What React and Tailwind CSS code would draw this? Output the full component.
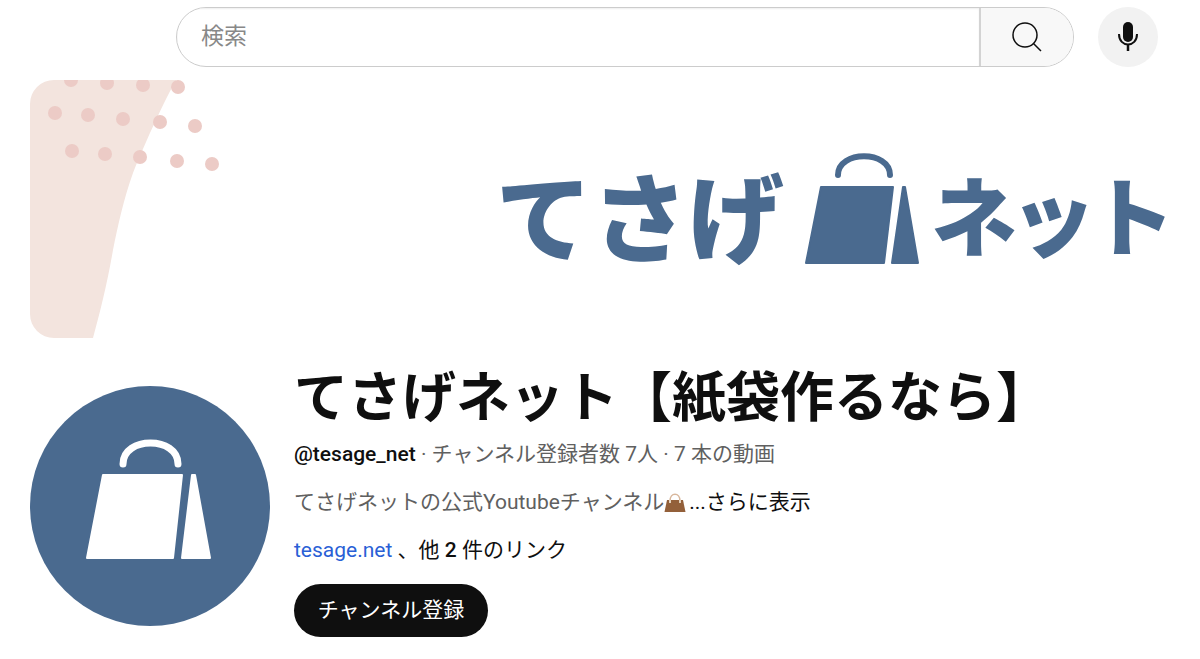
const FONT = { fontFamily: 'Roboto, "Noto Sans CJK JP", sans-serif' };

const dots = [
  [41, 0], [77, 3], [113, 5], [148, 7],
  [25, 33], [58, 35], [93, 39], [130, 42], [165, 46],
  [42, 71], [75, 74], [110, 77], [147, 81], [182, 84],
];

const Decoration = () => (
  <svg className="absolute left-0 top-0" width="240" height="258" viewBox="0 0 240 258">
    <path d="M0 0H146C134 22 118 56 103 93C94 118 88 145 83 170C77 205 70 232 63 258H0Z" fill="#f3e4de" />
    {dots.map(([cx, cy]) => (
      <circle key={`${cx}-${cy}`} cx={cx} cy={cy} r="7" fill="#eccbc6" />
    ))}
  </svg>
);

const BagLogo = () => (
  <svg width="116" height="114" viewBox="0 0 116 114" className="shrink-0">
    <path d="M34 22C34 -3 86 -3 86 22" fill="none" stroke="#4a6a8f" strokeWidth="6" strokeLinecap="round" />
    <path d="M17 34H89L80 110H2Z" fill="#4a6a8f" stroke="#4a6a8f" strokeWidth="2" strokeLinejoin="round" />
    <path d="M99 34H101L114 110H88Z" fill="#4a6a8f" stroke="#4a6a8f" strokeWidth="2" strokeLinejoin="round" />
  </svg>
);

const Avatar = () => (
  <div className="w-[240px] h-[240px] rounded-full bg-[#4a6a8f] shrink-0 flex items-center justify-center">
    <svg width="240" height="240" viewBox="0 0 240 240">
      <path d="M93 78C93 50 148 50 148 78" fill="none" stroke="#fff" strokeWidth="7" strokeLinecap="round" />
      <path d="M73 89H152L143 172H57Z" fill="#fff" stroke="#fff" strokeWidth="2" strokeLinejoin="round" />
      <path d="M162 89H165L180 172H152Z" fill="#fff" stroke="#fff" strokeWidth="2" strokeLinejoin="round" />
    </svg>
  </div>
);

const Handbag = () => (
  <svg width="22" height="22" viewBox="0 0 22 22" className="inline-block shrink-0">
    <path d="M6 10C6 1 16 1 16 10" fill="none" stroke="#d8b79c" strokeWidth="1.6" />
    <path d="M3 9H19L21.500 21H0.500Z" fill="#93603a" />
    <rect x="5" y="9" width="2" height="3" fill="#e3d2bd" />
    <rect x="15" y="9" width="2" height="3" fill="#e3d2bd" />
  </svg>
);

export default function App() {
  return (
    <div className="w-[1200px] h-[659px] overflow-hidden bg-white" style={FONT}>
      <header className="flex items-center gap-6 pt-[7px] pl-[176px] pr-[42px]">
        <div className="flex flex-1 h-[60px] rounded-full border-[1.5px] border-[#cccccc] overflow-hidden">
          <div className="flex-1 flex items-center pl-[24px] text-[23px] text-[#888888] shadow-[inset_0_1px_2px_#eeeeee]">
            検索
          </div>
          <button className="w-[94px] flex items-center justify-center bg-[#f8f8f8] border-l-2 border-[#d3d3d3]">
            <svg width="34" height="34" viewBox="0 0 34 34" fill="none" stroke="#0f0f0f" strokeWidth="1.5">
              <circle cx="15" cy="15" r="12" />
              <path d="M23.5 23.5L31 31" />
            </svg>
          </button>
        </div>
        <button className="w-[60px] h-[60px] rounded-full bg-[#f2f2f2] flex items-center justify-center">
          <svg width="24" height="32" viewBox="0 0 24 32" fill="none">
            <rect x="7" y="1" width="10" height="20" rx="5" fill="#0f0f0f" />
            <path d="M3 13C3 27 21 27 21 13" stroke="#0f0f0f" strokeWidth="2" />
            <path d="M12 23V30" stroke="#0f0f0f" strokeWidth="2.5" />
          </svg>
        </button>
      </header>

      <section className="relative mt-[13px] mx-[30px] h-[258px] rounded-[24px] overflow-hidden flex items-start justify-end pr-[2px] pt-[73px]">
        <Decoration />
        <div
          className="relative flex items-end text-[96px] leading-[114px] font-black text-[#4a6a8f]"
          style={{ fontFamily: '"Noto Sans CJK JP", sans-serif' }}
        >
          <span className="-mb-[3px]">てさげ</span>
          <div className="ml-[20px] mr-[11px]">
            <BagLogo />
          </div>
          <span className="-mb-[3px] text-[86px] tracking-[-7px]">ネット</span>
        </div>
      </section>

      <section className="flex gap-6 mt-[48px] px-[30px]">
        <Avatar />
        <div className="flex flex-col min-w-0 -mt-[14px]">
          <h1 className="text-[54px] leading-[54px] font-bold text-[#0f0f0f] whitespace-nowrap">
            てさげネット【紙袋作るなら】
          </h1>
          <p className="mt-[16px] text-[21px] leading-[24px] text-[#606060] whitespace-nowrap">
            <span className="font-medium text-[#0f0f0f]">@tesage_net</span> · チャンネル登録者数 7人 · 7 本の動画
          </p>
          <p className="mt-[24px] flex items-center text-[21px] leading-[24px] text-[#606060] whitespace-nowrap">
            てさげネットの公式Youtubeチャンネル
            <Handbag />
            <span className="ml-[3px] text-[#0f0f0f]">...さらに表示</span>
          </p>
          <p className="mt-[24px] text-[21px] leading-[24px] text-[#0f0f0f] whitespace-nowrap">
            <span className="text-[#2a5fd6]">tesage.net</span> 、他 <span className="font-medium">2</span> 件のリンク
          </p>
          <button className="mt-[22px] w-[194px] h-[53px] rounded-full bg-[#0f0f0f] text-white text-[21px]">
            チャンネル登録
          </button>
        </div>
      </section>
    </div>
  );
}
